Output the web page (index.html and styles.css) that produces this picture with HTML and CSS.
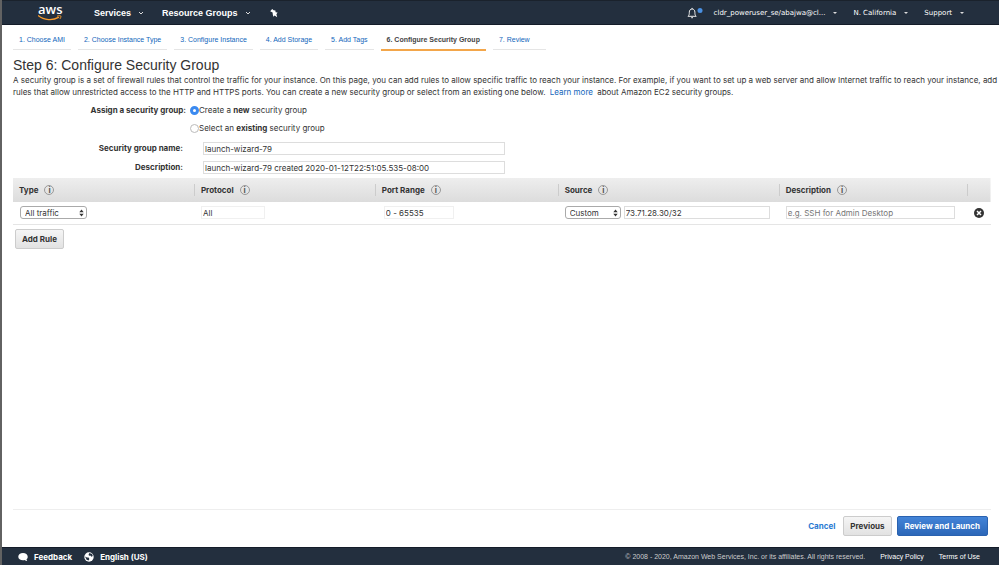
FILE: index.html
```html
<!DOCTYPE html>
<html lang="en">
<head>
    <meta charset="UTF-8">
    <meta name="viewport" content="width=device-width, initial-scale=1.0">
    <title>Configure Security Group</title>
    <link rel="stylesheet" href="styles.css">
</head>
<body>
    <header class="topbar">
        <a class="logo" href="#" aria-label="aws">
            <span class="logo-text">aws</span>
            <svg class="logo-smile" viewBox="0 0 24 6"><path d="M0.5 0.8C6 5.4 15 5.6 20.5 2.4" fill="none" stroke="#f79a2b" stroke-width="1.3" stroke-linecap="round"/><path d="M19 1.200c1.600-.6 3.400-.7 3.800-.2s-.1 2-1 3" fill="none" stroke="#f79a2b" stroke-width="1"/></svg>
        </a>
        <nav class="main-nav">
            <button class="nav-button">Services <svg class="chevron" viewBox="0 0 6 6"><path d="M1 2l2 2 2-2"/></svg></button>
            <button class="nav-button">Resource Groups <svg class="chevron" viewBox="0 0 6 6"><path d="M1 2l2 2 2-2"/></svg></button>
            <button class="nav-button" aria-label="Pin"><svg class="pin" viewBox="0 0 10 10"><path d="M1.200 3.200L3.200 1 4.600 2.200 6.400 2.400 6.600 4.200 8.600 4.600 7.400 6.200 8.200 9.200 5.600 7.400 4.400 8.800 3.800 6.600 3.600 4.600z" fill="#fff"/></svg></button>
        </nav>
        <nav class="account-nav">
            <button class="bell" aria-label="Notifications">
                <svg viewBox="0 0 16 12"><path d="M1 9.300h8.200C8.100 8.300 7.900 7.500 7.900 5.200 7.900 3.200 6.700 2 5.100 2S2.300 3.200 2.300 5.200C2.300 7.500 2.100 8.300 1 9.300zM5.100 2V.9M4.200 10.700h1.800" fill="none" stroke="#eee" stroke-width="1"/><circle cx="13" cy="3.500" r="2.500" fill="#4a90e2"/></svg>
            </button>
            <button class="account-button">cldr_poweruser_se/abajwa@cl... <span class="caret"></span></button>
            <button class="account-button">N. California <span class="caret"></span></button>
            <button class="account-button">Support <span class="caret"></span></button>
        </nav>
    </header>

    <main class="content">
        <nav class="steps">
            <a class="step" href="#">1. Choose AMI</a>
            <a class="step" href="#">2. Choose Instance Type</a>
            <a class="step" href="#">3. Configure Instance</a>
            <a class="step" href="#">4. Add Storage</a>
            <a class="step" href="#">5. Add Tags</a>
            <a class="step active" href="#">6. Configure Security Group</a>
            <a class="step last" href="#">7. Review</a>
        </nav>

        <h1>Step 6: Configure Security Group</h1>
        <p class="intro">A security group is a set of firewall rules that control the traffic for your instance. On this page, you can add rules to allow specific traffic to reach your instance. For example, if you want to set up a web server and allow Internet traffic to reach your instance, add rules that allow unrestricted access to the HTTP and HTTPS ports. You can create a new security group or select from an existing one below. <a href="#">Learn more</a> about Amazon EC2 security groups.</p>

        <form class="group-form">
            <div class="choice-row">
                <span class="form-label" id="assign">Assign a security group:</span>
                <div class="choices" role="radiogroup" aria-labelledby="assign">
                    <label class="choice"><input type="radio" name="group" checked><span>Create a <b>new</b> security group</span></label>
                    <label class="choice"><input type="radio" name="group"><span>Select an <b>existing</b> security group</span></label>
                </div>
            </div>
            <div class="field-row">
                <label class="form-label" for="group-name">Security group name:</label>
                <input class="text-input" id="group-name" type="text" value="launch-wizard-79">
            </div>
            <div class="field-row">
                <label class="form-label" for="group-desc">Description:</label>
                <input class="text-input" id="group-desc" type="text" value="launch-wizard-79 created 2020-01-12T22:51:05.535-08:00">
            </div>
        </form>

        <table class="rules">
            <colgroup>
                <col class="col-type"><col class="col-protocol"><col class="col-port"><col class="col-source"><col class="col-desc"><col>
            </colgroup>
            <thead>
                <tr>
                    <th><div class="head-cell">Type <span class="info">i</span></div></th>
                    <th><div class="head-cell">Protocol <span class="info">i</span></div></th>
                    <th><div class="head-cell">Port Range <span class="info">i</span></div></th>
                    <th><div class="head-cell">Source <span class="info">i</span></div></th>
                    <th><div class="head-cell">Description <span class="info">i</span></div></th>
                    <th><div class="head-cell"></div></th>
                </tr>
            </thead>
            <tbody>
                <tr>
                    <td>
                        <div class="cell"><select class="type-select" aria-label="Type"><option>All traffic</option></select></div>
                    </td>
                    <td>
                        <div class="cell"><input class="text-input faint protocol" type="text" value="All" aria-label="Protocol"></div>
                    </td>
                    <td>
                        <div class="cell"><input class="text-input faint port" type="text" value="0 - 65535" aria-label="Port Range"></div>
                    </td>
                    <td>
                        <div class="cell source-cell">
                            <select class="source-select" aria-label="Source type"><option>Custom</option></select>
                            <input class="text-input" type="text" value="73.71.28.30/32" aria-label="Source">
                        </div>
                    </td>
                    <td>
                        <div class="cell desc-cell"><input class="text-input" type="text" placeholder="e.g. SSH for Admin Desktop" aria-label="Description"></div>
                    </td>
                    <td>
                        <button class="remove" aria-label="Remove rule"><svg viewBox="0 0 10 10"><circle cx="5" cy="5" r="5" fill="#333"/><path d="M3 3l4 4M7 3l-4 4" stroke="#fff" stroke-width="1.500"/></svg></button>
                    </td>
                </tr>
            </tbody>
        </table>
        <button class="button add-rule">Add Rule</button>

        <div class="actions">
            <a class="cancel" href="#">Cancel</a>
            <button class="button">Previous</button>
            <button class="button primary">Review and Launch</button>
        </div>
    </main>

    <footer class="footer">
        <button class="footer-button"><svg viewBox="0 0 11 10"><path d="M5.500.5C2.500.5.3 2.300.3 4.600s2.200 4 5.200 4c.8 0 1.500-.1 2.100-.3.6.7 1.600 1.200 2.600 1.200-.6-.6-.8-1.300-.8-2 .9-.7 1.300-1.700 1.300-2.900C10.700 2.300 8.500.5 5.500.5z" fill="#fff"/></svg>Feedback</button>
        <button class="footer-button"><svg viewBox="0 0 10 10"><circle cx="5" cy="5" r="4.700" fill="#fff"/><path d="M5.400 1L8 2 8.800 4 7.400 4.800 6.400 3.600 5 3.800 4.600 2.400zM1 4.600L3 5.400 4.600 5.600 5.400 7 4.600 8.600 2.600 7.800z" fill="#232f3e"/></svg>English (US)</button>
        <span class="copyright">© 2008 - 2020, Amazon Web Services, Inc. or its affiliates. All rights reserved.</span>
        <a class="footer-link" href="#">Privacy Policy</a>
        <a class="footer-link" href="#">Terms of Use</a>
    </footer>
</body>
</html>
```

FILE: styles.css
```css
* {
    box-sizing: border-box;
}
body {
    margin: 0;
    min-height: 100vh;
    display: flex;
    flex-direction: column;
    border-left: 2px solid #626262;
    font-family: Inter, "Liberation Sans", Arial, sans-serif;
    font-size: 8px;
    line-height: 12px;
    color: #333;
    background: #fff;
}
button, input, select {
    font-family: inherit;
    font-size: 8px;
    margin: 0;
}
button {
    cursor: pointer;
}
a {
    color: #1166bb;
    text-decoration: none;
}

/* top bar */
.topbar {
    display: flex;
    align-items: center;
    height: 25px;
    padding: 0 35px 0 36px;
    background: #232f3e;
    border-top: 1px solid #1a222c;
    border-bottom: 1px solid #141c29;
}
.logo {
    display: flex;
    flex-direction: column;
    width: 24px;
    margin-right: 32px;
    color: #fff;
}
.logo-text {
    font-family: "Open Sans", sans-serif;
    font-size: 13px;
    font-weight: 600;
    line-height: 11px;
    text-align: center;
}
.logo-smile {
    width: 24px;
    height: 6px;
}
.main-nav {
    display: flex;
    gap: 18px;
}
.nav-button,
.account-button,
.bell {
    display: flex;
    align-items: center;
    padding: 0;
    border: 0;
    background: none;
    color: #fff;
}
.nav-button {
    gap: 7px;
    font-family: "Liberation Sans", Arial, sans-serif;
    font-size: 9px;
    font-weight: bold;
}
.chevron {
    width: 6px;
    height: 6px;
    fill: none;
    stroke: #ddd;
    stroke-width: 1;
}
.pin {
    width: 10px;
    height: 10px;
}
.account-nav {
    display: flex;
    gap: 16px;
    margin-left: auto;
}
.bell {
    margin-right: -5px;
}
.bell svg {
    width: 16px;
    height: 12px;
}
.account-button {
    gap: 8px;
    font-family: "DejaVu Sans", Verdana, sans-serif;
    font-size: 7px;
}
.caret {
    border: 2px solid transparent;
    border-top-color: #ddd;
    border-bottom: 0;
}

/* wizard steps */
.content {
    flex: 1;
    display: flex;
    flex-direction: column;
    padding: 6px 8px 0 11px;
}
.steps {
    display: flex;
    gap: 7px;
    height: 19px;
}
.step {
    padding: 3px 6px 0;
    border-bottom: 1px solid #e5e5e5;
    font-family: "Liberation Sans", Arial, sans-serif;
    font-size: 7px;
}
.step.active {
    margin-bottom: -1px;
    border-bottom: 2px solid #f3a64a;
    color: #444;
    font-weight: bold;
}
.step.last {
    padding-right: 16px;
}

h1 {
    margin: 7px 0 0;
    font-family: "Liberation Sans", Arial, sans-serif;
    font-size: 14px;
    font-weight: normal;
    line-height: 17px;
}
.intro {
    margin: 0 -7px 0 0;
    line-height: 12px;
}
.intro a {
    margin: 0 2px;
}

/* group form */
.group-form {
    display: flex;
    flex-direction: column;
    gap: 6px;
    padding: 6px 0 4px;
}
.choice-row,
.field-row {
    display: flex;
}
.form-label {
    font-weight: bold;
    text-align: right;
}
.choice-row .form-label {
    width: 173px;
    margin-right: 4px;
}
.field-row .form-label {
    width: 170px;
    margin-right: 20px;
}
.choices {
    display: flex;
    flex-direction: column;
    gap: 6px;
    margin-bottom: 2px;
}
.choice {
    display: flex;
    align-items: center;
}
.choice input {
    appearance: none;
    width: 9px;
    height: 9px;
    border: 1px solid #bbb;
    border-radius: 50%;
    background: #fff;
}
.choice input:checked {
    border: 3px solid #3b8af0;
}
.text-input {
    width: 100%;
    height: 13px;
    padding: 0 1px;
    border: 1px solid #ddd;
    background: #fff;
    color: #333;
}
.field-row .text-input {
    width: 302px;
}
.text-input::placeholder {
    color: #757575;
}

/* rules table */
.rules {
    width: 100%;
    table-layout: fixed;
    border-collapse: collapse;
}
.rules th,
.rules td {
    padding: 0;
    text-align: left;
}
.rules thead {
    background: linear-gradient(#eee, #dcdcdc);
}
.rules th {
    height: 24px;
}
.rules td {
    height: 22px;
    border-bottom: 1px solid #e5e5e5;
}
.col-type, .col-protocol {
    width: 18.5%;
}
.col-port {
    width: 18.7%;
}
.col-source {
    width: 22.6%;
}
.col-desc {
    width: 19.3%;
}
.head-cell {
    display: flex;
    align-items: center;
    gap: 6px;
    height: 12px;
    padding-left: 6px;
}
.rules th + th .head-cell {
    border-left: 1px solid #ccc;
}
.info {
    width: 10px;
    height: 10px;
    border: 1px solid #999;
    border-radius: 50%;
    font-size: 8px;
    line-height: 8px;
    text-align: center;
    color: #555;
}
.cell {
    display: flex;
    padding-left: 7px;
}
.text-input.faint {
    border-color: #f0f0f0;
}
.protocol {
    width: 64px;
}
.port {
    width: 70px;
    margin-left: 2px;
}
.source-cell {
    gap: 3px;
    padding-right: 9px;
}
.desc-cell {
    padding-right: 12px;
}
select {
    appearance: none;
    height: 13px;
    padding: 0 4px;
    border: 1px solid #aaa;
    border-radius: 3px;
    color: #333;
    background: #fff url("data:image/svg+xml,%3Csvg xmlns='http://www.w3.org/2000/svg' viewBox='0 0 5 8'%3E%3Cpath d='M.3 3.200L2.500.4l2.200 2.800zM.3 4.800l2.200 2.800 2.200-2.800z' fill='%23333'/%3E%3C/svg%3E") no-repeat right 2px center / 5px 8px;
}
.type-select {
    width: 67px;
}
.source-select {
    flex: none;
    width: 56px;
}
.remove {
    display: block;
    margin-left: 7px;
    padding: 0;
    border: 0;
    background: none;
}
.remove svg {
    display: block;
    width: 10px;
    height: 10px;
}

/* buttons */
.button {
    height: 20px;
    padding: 0 6px;
    border: 1px solid #ccc;
    border-radius: 2px;
    background: linear-gradient(#f5f5f5, #e2e2e2);
    color: #333;
    font-weight: bold;
}
.button.primary {
    padding: 0 7px;
    border-color: #2a62b0;
    background: linear-gradient(#4384d8, #2c67b8);
    color: #fff;
}
.add-rule {
    align-self: flex-start;
    margin: 4px 0 0 2px;
}
.actions {
    display: flex;
    align-items: center;
    justify-content: flex-end;
    gap: 5px;
    height: 38px;
    margin-top: auto;
    padding: 0 3px 5px 0;
    border-top: 1px solid #eee;
}
.cancel {
    margin-right: 3px;
    color: #2a7ad2;
    font-weight: bold;
}

/* footer */
.footer {
    display: flex;
    align-items: center;
    height: 18px;
    padding: 0 19px 0 16px;
    background: #232f3e;
    border-top: 1px solid #141c29;
    color: #fff;
}
.footer-button {
    display: flex;
    align-items: center;
    gap: 6px;
    margin-right: 12px;
    padding: 0;
    border: 0;
    background: none;
    color: #fff;
    font-weight: bold;
}
.footer-button svg {
    width: 10px;
    height: 10px;
}
.copyright,
.footer-link {
    font-family: "Liberation Sans", Arial, sans-serif;
    font-size: 7px;
}
.copyright {
    margin-left: auto;
    color: #ccc;
}
.footer-link {
    margin-left: 15px;
    color: #fff;
}
```
